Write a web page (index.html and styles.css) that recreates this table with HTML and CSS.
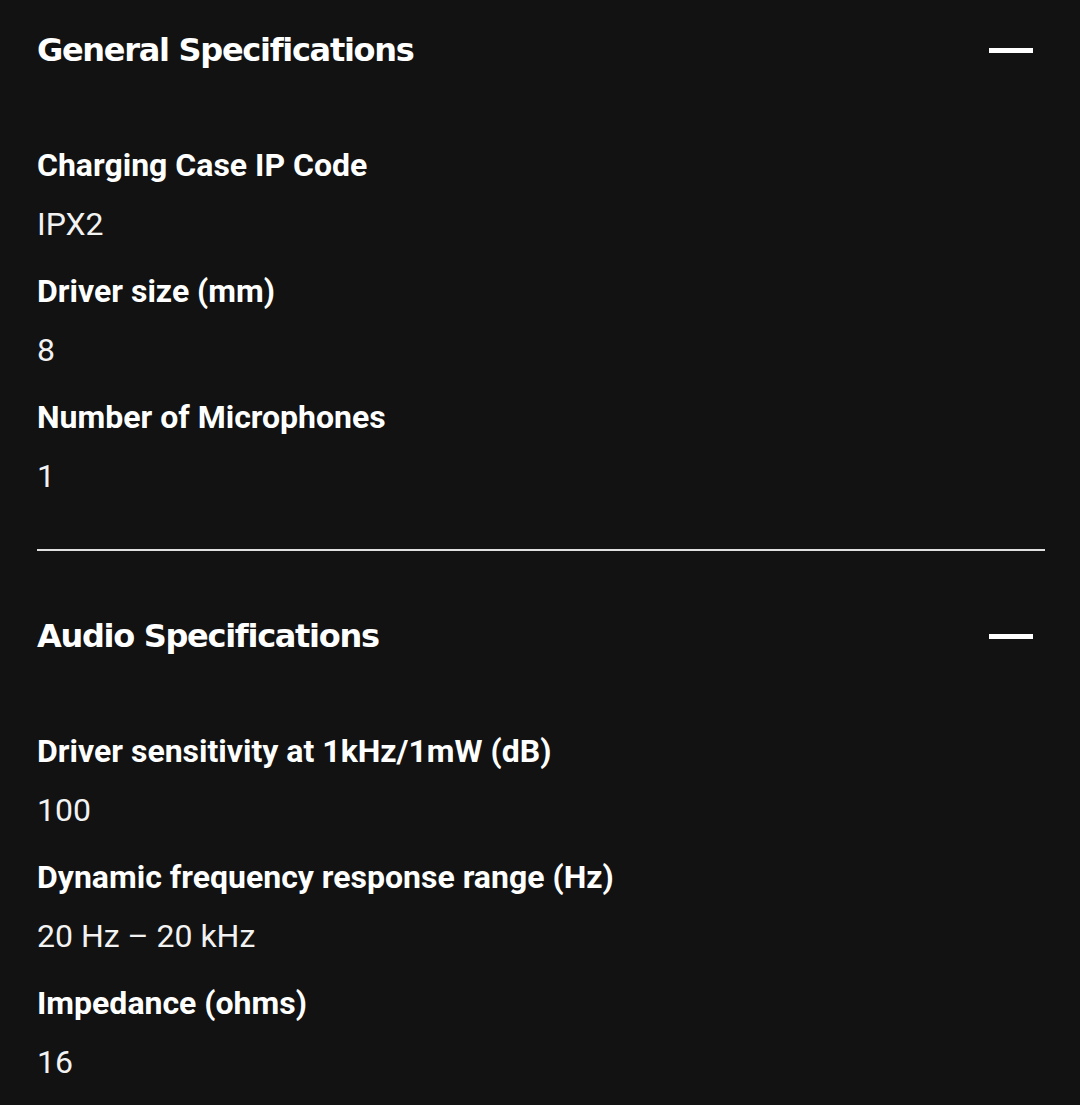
FILE: index.html
```html
<!DOCTYPE html>
<html lang="en">
<head>
<meta charset="utf-8">
<title>Specifications</title>
<link rel="stylesheet" href="styles.css">
</head>
<body>
<main class="specs">
  <section class="group">
    <div class="group-head">
      <h2 class="group-title">General Specifications</h2>
      <span class="minus" aria-hidden="true"></span>
    </div>
    <dl class="list">
      <dt>Charging Case IP Code</dt>
      <dd>IPX2</dd>
      <dt>Driver size (mm)</dt>
      <dd>8</dd>
      <dt>Number of Microphones</dt>
      <dd>1</dd>
    </dl>
  </section>
  <hr class="divider">
  <section class="group">
    <div class="group-head">
      <h2 class="group-title">Audio Specifications</h2>
      <span class="minus" aria-hidden="true"></span>
    </div>
    <dl class="list">
      <dt>Driver sensitivity at 1kHz/1mW (dB)</dt>
      <dd>100</dd>
      <dt>Dynamic frequency response range (Hz)</dt>
      <dd>20 Hz – 20 kHz</dd>
      <dt>Impedance (ohms)</dt>
      <dd>16</dd>
    </dl>
  </section>
</main>
</body>
</html>
```
FILE: styles.css
```css
html, body {
  margin: 0;
  padding: 0;
  background: #121212;
}
body {
  color: #ffffff;
  font-family: Roboto, "Liberation Sans", sans-serif;
}
.specs {
  width: 1008px;
  padding: 28px 0 0 37px;
}
.group-head {
  display: flex;
  align-items: center;
  justify-content: space-between;
  padding-right: 12px;
  height: 44px;
}
.group-title {
  margin: 0;
  font-family: "DejaVu Sans", Lato, sans-serif;
  font-weight: 700;
  font-size: 32px;
  line-height: 46px;
  letter-spacing: -1.3px;
}
.minus {
  display: block;
  width: 44px;
  height: 5px;
  background: #ffffff;
}
.list {
  margin: 73px 0 0 0;
  display: flex;
  flex-direction: column;
}
.list dt {
  margin: 0;
  font-weight: 700;
  font-size: 32px;
  line-height: 40px;
}
.list dd {
  margin: 19px 0 27px 0;
  font-weight: 400;
  font-size: 32px;
  line-height: 40px;
  color: #f2f2f2;
}
.list dd:last-child {
  margin-bottom: 0;
}
.divider {
  margin: 53px 0 63px 0;
  border: 0;
  height: 2px;
  background: #e0e0e0;
}
```
